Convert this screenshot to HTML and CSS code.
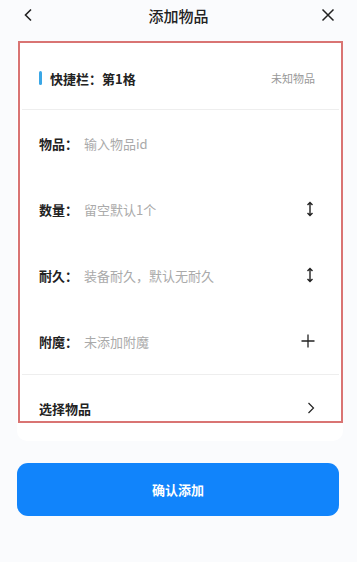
FILE: index.html
```html
<!DOCTYPE html>
<html lang="zh-CN">
<head>
    <meta charset="UTF-8">
    <meta name="viewport" content="width=device-width, initial-scale=1.0">
    <title>添加物品</title>
    <link rel="stylesheet" href="styles.css">
</head>
<body>
    <div class="topbar">
        <svg class="top-icon" viewBox="0 0 14 14" width="14" height="14"><path d="M9 1.5 L3.5 7 L9 12.5" fill="none" stroke="#222" stroke-width="1.6"/></svg>
        <div class="title">添加物品</div>
        <svg class="top-icon" viewBox="0 0 14 14" width="14" height="14"><path d="M1.5 1.5 L12.5 12.5 M12.5 1.5 L1.5 12.5" fill="none" stroke="#222" stroke-width="1.5"/></svg>
    </div>

    <div class="card">
        <div class="highlight">
            <div class="slot-row">
                <div class="slot-title"><span class="bar"></span>快捷栏：第1格</div>
                <div class="slot-note">未知物品</div>
            </div>
            <div class="field">
                <span class="label">物品：</span>
                <span class="placeholder">输入物品id</span>
            </div>
            <div class="field">
                <span class="label">数量：</span>
                <span class="placeholder">留空默认1个</span>
                <svg class="icon" viewBox="0 0 10 16" width="10" height="16"><path d="M5 1.5 V14.5 M2.5 4 L5 1.5 L7.5 4 M2.5 12 L5 14.5 L7.5 12" fill="none" stroke="#222" stroke-width="1.4"/></svg>
            </div>
            <div class="field">
                <span class="label">耐久：</span>
                <span class="placeholder">装备耐久，默认无耐久</span>
                <svg class="icon" viewBox="0 0 10 16" width="10" height="16"><path d="M5 1.5 V14.5 M2.5 4 L5 1.5 L7.5 4 M2.5 12 L5 14.5 L7.5 12" fill="none" stroke="#222" stroke-width="1.4"/></svg>
            </div>
            <div class="field last-field">
                <span class="label">附魔：</span>
                <span class="placeholder">未添加附魔</span>
                <svg class="icon" viewBox="0 0 14 14" width="14" height="14"><path d="M7 0.5 V13.5 M0.5 7 H13.5" fill="none" stroke="#222" stroke-width="1.3"/></svg>
            </div>
            <div class="choose-row">
                <span class="choose-label">选择物品</span>
                <svg class="icon" viewBox="0 0 8 12" width="8" height="12"><path d="M1.5 1 L6.5 6 L1.5 11" fill="none" stroke="#222" stroke-width="1.2"/></svg>
            </div>
        </div>
    </div>

    <button class="confirm-btn">确认添加</button>
</body>
</html>
```

FILE: styles.css
```css
body {
    margin: 0;
    padding: 0;
    background: #fafbfd;
    font-family: "Noto Sans CJK SC", "Noto Sans", sans-serif;
    color: #222;
    width: 357px;
    height: 562px;
    overflow: hidden;
}
.topbar {
    height: 30px;
    display: flex;
    align-items: center;
    justify-content: space-between;
    padding: 0 22px 0 22px;
}
.top-icon {
    display: block;
}
.title {
    font-size: 15px;
    font-weight: 500;
    color: #222;
}
.card {
    margin: 11px 14px 0 17px;
    background: #fff;
    border-radius: 10px;
    padding-bottom: 18px;
}
.highlight {
    border: 2px solid #d97473;
    margin-left: 1px;
    height: 378px;
    overflow: hidden;
}
.slot-row {
    height: 67px;
    box-sizing: border-box;
    padding: 4px 24px 0 17px;
    display: flex;
    align-items: center;
    justify-content: space-between;
    margin: 0 2px;
    border-bottom: 1px solid #eeeeee;
}
.slot-title {
    display: flex;
    align-items: center;
    font-size: 13px;
    font-weight: 700;
}
.bar {
    width: 3px;
    height: 14px;
    border-radius: 2px;
    background: #3aa7e6;
    margin-right: 8px;
}
.slot-note {
    font-size: 11px;
    color: #999;
}
.field {
    height: 66px;
    display: flex;
    align-items: center;
    padding: 0 26px 0 19px;
}
.last-field {
    border-bottom: 1px solid #eeeeee;
    margin: 0 2px;
    padding: 0 24px 0 17px;
}
.label {
    font-size: 13px;
    font-weight: 700;
    width: 45px;
    flex-shrink: 0;
}
.placeholder {
    flex: 1;
    font-size: 13px;
    color: #aaa;
}
.icon {
    display: block;
}
.choose-row {
    height: 66px;
    display: flex;
    align-items: center;
    justify-content: space-between;
    padding: 0 26px 0 19px;
}
.choose-label {
    font-size: 13px;
    font-weight: 700;
    white-space: nowrap;
}
.confirm-btn {
    display: block;
    margin: 22px 0 0 17px;
    width: 322px;
    height: 53px;
    border: none;
    border-radius: 11px;
    background: #1184fb;
    color: #fff;
    font-family: inherit;
    font-size: 13px;
    font-weight: 700;
}
```
